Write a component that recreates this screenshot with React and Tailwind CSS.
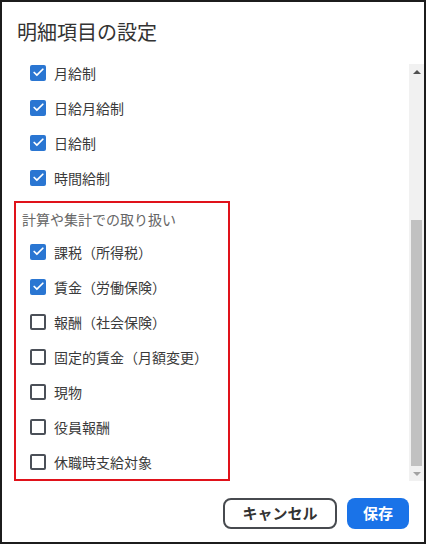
import { Check } from 'lucide-react';

const TOP_ITEMS = [
  { label: '月給制', checked: true },
  { label: '日給月給制', checked: true },
  { label: '日給制', checked: true },
  { label: '時間給制', checked: true },
];

const CALC_ITEMS = [
  { label: '課税（所得税）', checked: true },
  { label: '賃金（労働保険）', checked: true },
  { label: '報酬（社会保険）', checked: false },
  { label: '固定的賃金（月額変更）', checked: false },
  { label: '現物', checked: false },
  { label: '役員報酬', checked: false },
  { label: '休職時支給対象', checked: false },
];

function CheckRow({ label, checked, className = '' }) {
  return (
    <div className={`flex items-center h-[35px] gap-2 ${className}`}>
      {checked ? (
        <span className="w-4 h-4 rounded-[2px] bg-[#2a76d2] flex items-center justify-center">
          <Check size={13} strokeWidth={3.2} className="text-white" />
        </span>
      ) : (
        <span className="w-4 h-4 rounded-[2px] border-2 border-[#4b5058] bg-white" />
      )}
      <span className="text-[14px] leading-4 text-[#3a3a3a]">{label}</span>
    </div>
  );
}

function Scrollbar() {
  return (
    <div className="w-[15px] h-full bg-[#f1f1f1] flex flex-col">
      <div className="h-[15px] flex items-center justify-center">
        <span className="w-0 h-0 border-l-[4px] border-r-[4px] border-b-[4px] border-l-transparent border-r-transparent border-b-[#505050]" />
      </div>
      <div className="flex-1 flex flex-col justify-end px-[2px]">
        <div className="h-[246px] bg-[#c1c1c1]" />
      </div>
      <div className="h-[15px] flex items-center justify-center">
        <span className="w-0 h-0 border-l-[4px] border-r-[4px] border-t-[4px] border-l-transparent border-r-transparent border-t-[#a3a3a3]" />
      </div>
    </div>
  );
}

export default function App() {
  return (
    <div
      className="w-[426px] h-[544px] border-2 border-[#1c1c1c] bg-white flex flex-col"
      style={{ fontFamily: '"Noto Sans CJK JP", "Noto Sans", sans-serif' }}
    >
      <h1 className="pt-4 pl-[15px] text-[20px] leading-7 text-[#333]">明細項目の設定</h1>

      <div className="mt-[18px] h-[417px] flex">
        <div className="flex-1 overflow-hidden pl-3">
          {/* scrolled to the bottom */}
          <div className="-mt-[9px]">
            {TOP_ITEMS.map((it) => (
              <CheckRow key={it.label} {...it} className="pl-4" />
            ))}
            <div className="mt-[6px] w-[216px] border-2 border-[#e0121a]">
              <div className="pt-[6px] mb-[5px] pl-[6px] h-[26px] text-[14px] leading-5 text-[#666]">
                計算や集計での取り扱い
              </div>
              {CALC_ITEMS.map((it) => (
                <CheckRow key={it.label} {...it} className="pl-[14px]" />
              ))}
            </div>
          </div>
        </div>
        <Scrollbar />
      </div>

      <div className="mt-[17px] flex justify-end gap-[10px] pr-[15px]">
        <button className="w-[114px] h-[31px] rounded-lg border-2 border-[#474a4f] text-[15px] font-bold text-[#333]">
          キャンセル
        </button>
        <button className="w-[62px] h-[31px] rounded-lg bg-[#1a73e8] text-[15px] font-bold text-white">
          保存
        </button>
      </div>
    </div>
  );
}
